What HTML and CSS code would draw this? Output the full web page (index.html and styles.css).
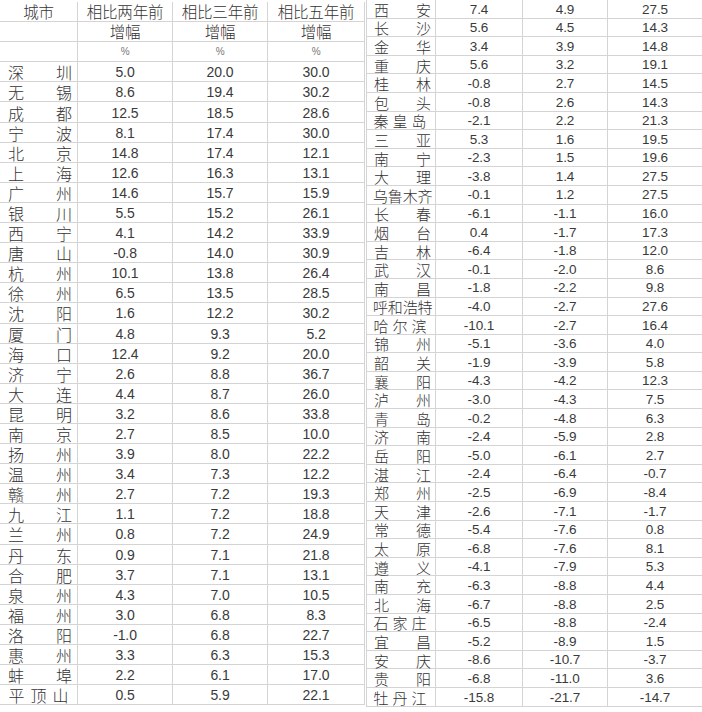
FILE: index.html
```html
<!DOCTYPE html>
<html lang="zh-CN">
<head>
<meta charset="utf-8">
<title>城市 增幅</title>
<link rel="stylesheet" href="styles.css">
</head>
<body>
<div class="page">
  <div class="t left">
    <div class="h">城市</div><div class="h">相比两年前</div><div class="h">相比三年前</div><div class="h">相比五年前</div>
    <div class="h"></div><div class="h">增幅</div><div class="h">增幅</div><div class="h">增幅</div>
    <div class="h"></div><div class="h pct">%</div><div class="h pct">%</div><div class="h pct">%</div>
    <div class="nm"><span>深</span><span>圳</span></div><div class="v">5.0</div><div class="v">20.0</div><div class="v">30.0</div>
    <div class="nm"><span>无</span><span>锡</span></div><div class="v">8.6</div><div class="v">19.4</div><div class="v">30.2</div>
    <div class="nm"><span>成</span><span>都</span></div><div class="v">12.5</div><div class="v">18.5</div><div class="v">28.6</div>
    <div class="nm"><span>宁</span><span>波</span></div><div class="v">8.1</div><div class="v">17.4</div><div class="v">30.0</div>
    <div class="nm"><span>北</span><span>京</span></div><div class="v">14.8</div><div class="v">17.4</div><div class="v">12.1</div>
    <div class="nm"><span>上</span><span>海</span></div><div class="v">12.6</div><div class="v">16.3</div><div class="v">13.1</div>
    <div class="nm"><span>广</span><span>州</span></div><div class="v">14.6</div><div class="v">15.7</div><div class="v">15.9</div>
    <div class="nm"><span>银</span><span>川</span></div><div class="v">5.5</div><div class="v">15.2</div><div class="v">26.1</div>
    <div class="nm"><span>西</span><span>宁</span></div><div class="v">4.1</div><div class="v">14.2</div><div class="v">33.9</div>
    <div class="nm"><span>唐</span><span>山</span></div><div class="v">-0.8</div><div class="v">14.0</div><div class="v">30.9</div>
    <div class="nm"><span>杭</span><span>州</span></div><div class="v">10.1</div><div class="v">13.8</div><div class="v">26.4</div>
    <div class="nm"><span>徐</span><span>州</span></div><div class="v">6.5</div><div class="v">13.5</div><div class="v">28.5</div>
    <div class="nm"><span>沈</span><span>阳</span></div><div class="v">1.6</div><div class="v">12.2</div><div class="v">30.2</div>
    <div class="nm"><span>厦</span><span>门</span></div><div class="v">4.8</div><div class="v">9.3</div><div class="v">5.2</div>
    <div class="nm"><span>海</span><span>口</span></div><div class="v">12.4</div><div class="v">9.2</div><div class="v">20.0</div>
    <div class="nm"><span>济</span><span>宁</span></div><div class="v">2.6</div><div class="v">8.8</div><div class="v">36.7</div>
    <div class="nm"><span>大</span><span>连</span></div><div class="v">4.4</div><div class="v">8.7</div><div class="v">26.0</div>
    <div class="nm"><span>昆</span><span>明</span></div><div class="v">3.2</div><div class="v">8.6</div><div class="v">33.8</div>
    <div class="nm"><span>南</span><span>京</span></div><div class="v">2.7</div><div class="v">8.5</div><div class="v">10.0</div>
    <div class="nm"><span>扬</span><span>州</span></div><div class="v">3.9</div><div class="v">8.0</div><div class="v">22.2</div>
    <div class="nm"><span>温</span><span>州</span></div><div class="v">3.4</div><div class="v">7.3</div><div class="v">12.2</div>
    <div class="nm"><span>赣</span><span>州</span></div><div class="v">2.7</div><div class="v">7.2</div><div class="v">19.3</div>
    <div class="nm"><span>九</span><span>江</span></div><div class="v">1.1</div><div class="v">7.2</div><div class="v">18.8</div>
    <div class="nm"><span>兰</span><span>州</span></div><div class="v">0.8</div><div class="v">7.2</div><div class="v">24.9</div>
    <div class="nm"><span>丹</span><span>东</span></div><div class="v">0.9</div><div class="v">7.1</div><div class="v">21.8</div>
    <div class="nm"><span>合</span><span>肥</span></div><div class="v">3.7</div><div class="v">7.1</div><div class="v">13.1</div>
    <div class="nm"><span>泉</span><span>州</span></div><div class="v">4.3</div><div class="v">7.0</div><div class="v">10.5</div>
    <div class="nm"><span>福</span><span>州</span></div><div class="v">3.0</div><div class="v">6.8</div><div class="v">8.3</div>
    <div class="nm"><span>洛</span><span>阳</span></div><div class="v">-1.0</div><div class="v">6.8</div><div class="v">22.7</div>
    <div class="nm"><span>惠</span><span>州</span></div><div class="v">3.3</div><div class="v">6.3</div><div class="v">15.3</div>
    <div class="nm"><span>蚌</span><span>埠</span></div><div class="v">2.2</div><div class="v">6.1</div><div class="v">17.0</div>
    <div class="nm n3"><span>平</span><span>顶</span><span>山</span></div><div class="v">0.5</div><div class="v">5.9</div><div class="v">22.1</div>
  </div>
  <div class="t right">
    <div class="nm"><span>西</span><span>安</span></div><div class="v">7.4</div><div class="v">4.9</div><div class="v">27.5</div>
    <div class="nm"><span>长</span><span>沙</span></div><div class="v">5.6</div><div class="v">4.5</div><div class="v">14.3</div>
    <div class="nm"><span>金</span><span>华</span></div><div class="v">3.4</div><div class="v">3.9</div><div class="v">14.8</div>
    <div class="nm"><span>重</span><span>庆</span></div><div class="v">5.6</div><div class="v">3.2</div><div class="v">19.1</div>
    <div class="nm"><span>桂</span><span>林</span></div><div class="v">-0.8</div><div class="v">2.7</div><div class="v">14.5</div>
    <div class="nm"><span>包</span><span>头</span></div><div class="v">-0.8</div><div class="v">2.6</div><div class="v">14.3</div>
    <div class="nm n3"><span>秦</span><span>皇</span><span>岛</span></div><div class="v">-2.1</div><div class="v">2.2</div><div class="v">21.3</div>
    <div class="nm"><span>三</span><span>亚</span></div><div class="v">5.3</div><div class="v">1.6</div><div class="v">19.5</div>
    <div class="nm"><span>南</span><span>宁</span></div><div class="v">-2.3</div><div class="v">1.5</div><div class="v">19.6</div>
    <div class="nm"><span>大</span><span>理</span></div><div class="v">-3.8</div><div class="v">1.4</div><div class="v">27.5</div>
    <div class="nm n4"><span>乌</span><span>鲁</span><span>木</span><span>齐</span></div><div class="v">-0.1</div><div class="v">1.2</div><div class="v">27.5</div>
    <div class="nm"><span>长</span><span>春</span></div><div class="v">-6.1</div><div class="v">-1.1</div><div class="v">16.0</div>
    <div class="nm"><span>烟</span><span>台</span></div><div class="v">0.4</div><div class="v">-1.7</div><div class="v">17.3</div>
    <div class="nm"><span>吉</span><span>林</span></div><div class="v">-6.4</div><div class="v">-1.8</div><div class="v">12.0</div>
    <div class="nm"><span>武</span><span>汉</span></div><div class="v">-0.1</div><div class="v">-2.0</div><div class="v">8.6</div>
    <div class="nm"><span>南</span><span>昌</span></div><div class="v">-1.8</div><div class="v">-2.2</div><div class="v">9.8</div>
    <div class="nm n4"><span>呼</span><span>和</span><span>浩</span><span>特</span></div><div class="v">-4.0</div><div class="v">-2.7</div><div class="v">27.6</div>
    <div class="nm n3"><span>哈</span><span>尔</span><span>滨</span></div><div class="v">-10.1</div><div class="v">-2.7</div><div class="v">16.4</div>
    <div class="nm"><span>锦</span><span>州</span></div><div class="v">-5.1</div><div class="v">-3.6</div><div class="v">4.0</div>
    <div class="nm"><span>韶</span><span>关</span></div><div class="v">-1.9</div><div class="v">-3.9</div><div class="v">5.8</div>
    <div class="nm"><span>襄</span><span>阳</span></div><div class="v">-4.3</div><div class="v">-4.2</div><div class="v">12.3</div>
    <div class="nm"><span>泸</span><span>州</span></div><div class="v">-3.0</div><div class="v">-4.3</div><div class="v">7.5</div>
    <div class="nm"><span>青</span><span>岛</span></div><div class="v">-0.2</div><div class="v">-4.8</div><div class="v">6.3</div>
    <div class="nm"><span>济</span><span>南</span></div><div class="v">-2.4</div><div class="v">-5.9</div><div class="v">2.8</div>
    <div class="nm"><span>岳</span><span>阳</span></div><div class="v">-5.0</div><div class="v">-6.1</div><div class="v">2.7</div>
    <div class="nm"><span>湛</span><span>江</span></div><div class="v">-2.4</div><div class="v">-6.4</div><div class="v">-0.7</div>
    <div class="nm"><span>郑</span><span>州</span></div><div class="v">-2.5</div><div class="v">-6.9</div><div class="v">-8.4</div>
    <div class="nm"><span>天</span><span>津</span></div><div class="v">-2.6</div><div class="v">-7.1</div><div class="v">-1.7</div>
    <div class="nm"><span>常</span><span>德</span></div><div class="v">-5.4</div><div class="v">-7.6</div><div class="v">0.8</div>
    <div class="nm"><span>太</span><span>原</span></div><div class="v">-6.8</div><div class="v">-7.6</div><div class="v">8.1</div>
    <div class="nm"><span>遵</span><span>义</span></div><div class="v">-4.1</div><div class="v">-7.9</div><div class="v">5.3</div>
    <div class="nm"><span>南</span><span>充</span></div><div class="v">-6.3</div><div class="v">-8.8</div><div class="v">4.4</div>
    <div class="nm"><span>北</span><span>海</span></div><div class="v">-6.7</div><div class="v">-8.8</div><div class="v">2.5</div>
    <div class="nm n3"><span>石</span><span>家</span><span>庄</span></div><div class="v">-6.5</div><div class="v">-8.8</div><div class="v">-2.4</div>
    <div class="nm"><span>宜</span><span>昌</span></div><div class="v">-5.2</div><div class="v">-8.9</div><div class="v">1.5</div>
    <div class="nm"><span>安</span><span>庆</span></div><div class="v">-8.6</div><div class="v">-10.7</div><div class="v">-3.7</div>
    <div class="nm"><span>贵</span><span>阳</span></div><div class="v">-6.8</div><div class="v">-11.0</div><div class="v">3.6</div>
    <div class="nm n3"><span>牡</span><span>丹</span><span>江</span></div><div class="v">-15.8</div><div class="v">-21.7</div><div class="v">-14.7</div>
  </div>
</div>
</body>
</html>
```
FILE: styles.css
```css
html, body {
  margin: 0;
  padding: 0;
  background: #ffffff;
}
body {
  width: 702px;
  height: 712px;
  overflow: hidden;
  font-family: "Liberation Sans", "Noto Sans CJK SC", sans-serif;
  color: #2e2e2e;
}
.page {
  display: flex;
  align-items: flex-start;
  gap: 1px;
}
.t {
  display: grid;
  box-sizing: border-box;
}
.left {
  width: 365px;
  margin-top: 2px;
  grid-template-columns: 78px 95px 95px 97px;
  grid-auto-rows: 20.1px;
  font-size: 14px;
}
.right {
  width: 336px;
  border-left: 1px solid #d4d4d4;
  grid-template-columns: 69px 87px 85px 95px;
  grid-auto-rows: 18.6px;
  font-size: 13.5px;
}
.t > div {
  box-sizing: border-box;
  border-right: 1px solid #d4d4d4;
  border-bottom: 1px solid #d4d4d4;
  display: flex;
  align-items: center;
  white-space: nowrap;
  line-height: 1;
  padding-top: 1px;
}
.h {
  justify-content: center;
  font-family: "Noto Sans CJK SC", sans-serif;
  font-size: 15.5px;
  font-weight: 300;
  letter-spacing: -0.2px;
  color: #333333;
}
.h.pct {
  font-size: 10px;
  color: #777777;
  font-family: "Liberation Sans", sans-serif;
}
.v {
  justify-content: center;
  letter-spacing: -0.1px;
  color: #3a3a3a;
}
.nm {
  justify-content: space-between;
  font-family: "Noto Sans CJK SC", sans-serif;
  font-weight: 300;
  color: #333333;
}
.left .nm {
  font-size: 16px;
  padding: 1px 5px 0 8px;
}
.right .nm {
  font-size: 15px;
  padding: 1px 4px 0 7px;
}
.left .nm.n3 {
  justify-content: center;
  gap: 6px;
  padding: 1px 0 0 0;
}
.right .nm.n3 {
  justify-content: center;
  gap: 4px;
  padding: 1px 2px 0 0;
}
.right .nm.n4 {
  justify-content: space-between;
  padding: 1px 3px 0 6px;
  letter-spacing: -0.5px;
}
```
